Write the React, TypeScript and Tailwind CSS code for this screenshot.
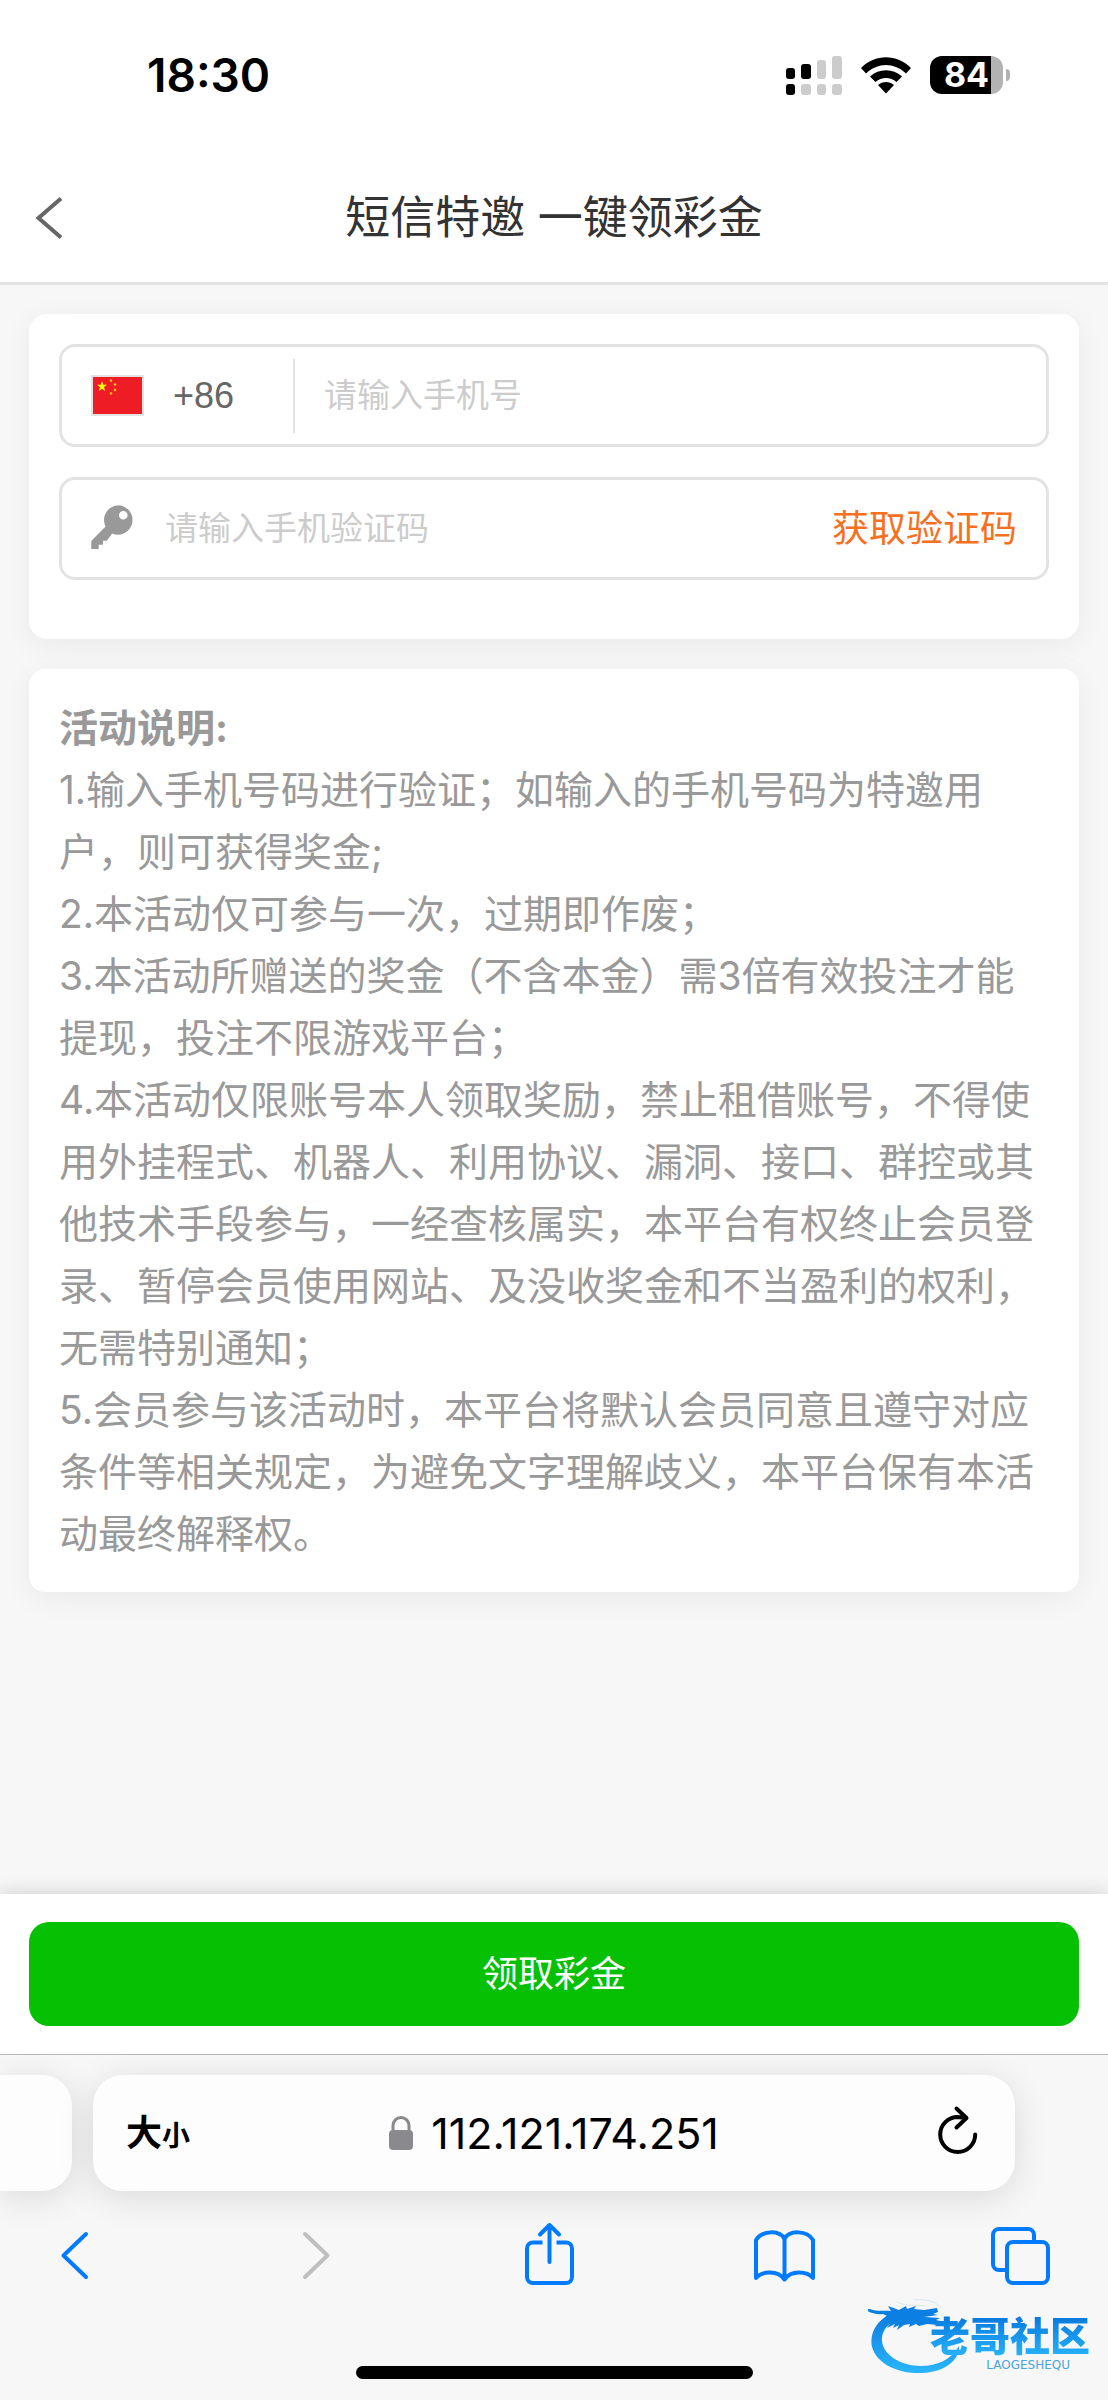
import React from 'react';

const rules = [
  '1.输入手机号码进行验证；如输入的手机号码为特邀用户，则可获得奖金;',
  '2.本活动仅可参与一次，过期即作废；',
  '3.本活动所赠送的奖金（不含本金）需3倍有效投注才能提现，投注不限游戏平台；',
  '4.本活动仅限账号本人领取奖励，禁止租借账号，不得使用外挂程式、机器人、利用协议、漏洞、接口、群控或其他技术手段参与，一经查核属实，本平台有权终止会员登录、暂停会员使用网站、及没收奖金和不当盈利的权利，无需特别通知；',
  '5.会员参与该活动时，本平台将默认会员同意且遵守对应条件等相关规定，为避免文字理解歧义，本平台保有本活动最终解释权。',
];

const toolbar = [
  { label: '后退', color: 'text-[#007aff]', icon: <path d="M42 12 19.5 33.5 42 55" /> },
  { label: '前进', color: 'text-[#bfbfbf]', icon: <path d="M25 12 47.5 33.5 25 55" /> },
  {
    label: '分享',
    color: 'text-[#007aff]',
    icon: (
      <>
        <path d="M25.5 20.5H16a6 6 0 0 0-6 6V55a6 6 0 0 0 6 6h33a6 6 0 0 0 6-6V26.500a6 6 0 0 0-6-6h-9.500" strokeLinecap="butt" />
        <path d="M32.500 40V3.500M23 12.500l9.500-9.500 9.500 9.500" />
      </>
    ),
  },
  {
    label: '书签',
    color: 'text-[#007aff]',
    icon: (
      <path d="M31.500 17C27 8 9 8 3 18v38c6-7 22-8 28.500 1.500C38 48 54 49 60 56V18C54 8 36 8 31.500 17v40" />
    ),
  },
  {
    label: '标签页',
    color: 'text-[#007aff]',
    icon: (
      <>
        <path d="M45 20v-7a6 6 0 0 0-6-6H10a6 6 0 0 0-6 6v29a6 6 0 0 0 6 6h8" strokeLinecap="butt" />
        <rect x="18" y="20" width="41" height="41" rx="6" />
      </>
    ),
  },
];

function StatusBar() {
  return (
    <div className="flex h-[149px] items-center justify-between pr-[98px] pl-[147px] text-black">
      <time className="font-[Inter,sans-serif] text-[46px] leading-none font-semibold">18:30</time>
      <div className="flex items-center gap-[19px]">
        <svg width="56" height="40" viewBox="0 0 56 40">
          <g fill="#000">
            <rect x="0" y="13" width="9" height="11" rx="3" />
            <rect x="15" y="9" width="10" height="15" rx="3" />
            <rect x="0" y="29" width="9" height="11" rx="3" />
          </g>
          <g fill="#ccc">
            <rect x="31" y="5" width="9" height="19" rx="3" />
            <rect x="46" y="1" width="10" height="23" rx="3" />
            <rect x="15" y="29" width="10" height="11" rx="3" />
            <rect x="31" y="29" width="9" height="11" rx="3" />
            <rect x="46" y="29" width="10" height="11" rx="3" />
          </g>
        </svg>
        <svg width="50" height="38" viewBox="0 0 50 38">
          <path d="M0 12C14-2.500 36-2.500 50 12l-5 5.500C33 6 17 6 5 17.500z" />
          <path d="M9 20.500c9-8.500 23-8.500 32 0L35.500 26c-6-5.500-15-5.500-21 0z" />
          <path d="M17 29c4.500-4 11.500-4 16 0l-8 8.500z" />
        </svg>
        <div className="flex items-center gap-[3px]">
          <div className="flex h-[38px] w-[73px] items-center justify-center rounded-[12px] bg-[linear-gradient(90deg,#000_61px,#b3b3b3_61px)] font-[Inter,sans-serif] text-[34px] leading-none font-bold text-white">
            84
          </div>
          <div className="h-3 w-1 rounded-r-full bg-[#b3b3b3]" />
        </div>
      </div>
    </div>
  );
}

function Flag() {
  return (
    <svg width="53" height="41" viewBox="0 0 53 41" className="shrink-0">
      <rect width="53" height="41" fill="#e3e3e3" />
      <rect x="2" y="2" width="49" height="37" fill="#ee1c25" />
      <path fill="#ff0" d="m11 6 1.300 3.700H16l-3 2.400 1.100 3.900-3.100-2.300L7.900 16 9 12.100 6 9.700h3.700z" />
      <g fill="#f9c613">
        <circle cx="20" cy="5.500" r="1.300" />
        <circle cx="24" cy="9.500" r="1.300" />
        <circle cx="24" cy="15" r="1.300" />
        <circle cx="20" cy="18.500" r="1.300" />
      </g>
    </svg>
  );
}

function KeyIcon() {
  return (
    <svg width="42" height="48" viewBox="0 0 42 48" fill="#999" className="shrink-0">
      <path
        fillRule="evenodd"
        d="M27.500 0.300a14.500 14.700 0 1 1-6.200 28.200l-5.600 7.200H12v4H7.700V44H.3v-8L14.500 21.500A14.500 14.700 0 0 1 27.500.3zm4.800 5.700a4.300 4.300 0 1 0 0 8.600 4.300 4.300 0 0 0 0-8.600z"
      />
    </svg>
  );
}

function Logo() {
  return (
    <div className="absolute right-[18px] bottom-[24px] h-[80px] w-[222px]">
      <svg width="94" height="80" viewBox="0 0 94 80" className="absolute top-0 left-0">
        <defs>
          <linearGradient id="wave" x1="0" y1="0" x2="0" y2="1">
            <stop offset="0" stopColor="#0877dd" />
            <stop offset="1" stopColor="#2ab6fb" />
          </linearGradient>
        </defs>
        <path
          fill="url(#wave)"
          d="M34 13C10 20 1 36 4 51c5 18 28 27 50 26 24-1 38-14 37-27-8 14-22 20-38 20-20 0-38-11-39-25-1-11 8-21 24-25z"
        />
        <path
          fill="#0b80e2"
          d="M2 13c8 3 14 1 21 2l-3-5 11 4 7-4 1 3 9-3-2 3 10 1 13-2 1 4-5 2 5 1-14 2 16 1-4 2 4 1-2 4-11-1-8 2-3-2-7 3 1-3-6 1-7 5 2-5-6 3 2-4-8 4 6-9-10-5c-8 1-15-2-18-5z"
        />
        <path fill="none" stroke="#d5e8f2" d="M29 6c10 5 18 2 27 4M46 4c12-1 22 1 27 8" />
      </svg>
      <div className="absolute right-0 bottom-[5px] flex flex-col items-end">
        <span className="bg-linear-to-b from-[#0877dd] to-[#2ab6fb] bg-clip-text text-[40px] leading-[44px] font-black text-transparent">
          老哥社区
        </span>
        <span className="pr-5 font-['DejaVu_Sans',sans-serif] text-[12px] leading-[12px] text-[#4aa3e0]">LAOGESHEQU</span>
      </div>
    </div>
  );
}

export default function App() {
  return (
    <div
      lang="zh-CN"
      className="flex min-h-screen flex-col bg-[#f7f7f7] font-[Inter,'Noto_Sans_CJK_SC',sans-serif]"
    >
      <header className="border-b-[3px] border-[#e2e2e2] bg-white">
        <StatusBar />
        <div className="grid h-[133px] grid-cols-[1fr_auto_1fr] items-center px-[35px] pt-1">
          <button aria-label="返回" className="w-7">
            <svg width="28" height="42" viewBox="0 0 28 42" fill="none" stroke="#666" strokeWidth="4">
              <path d="M26 1.500 3.500 21 26 40.500" />
            </svg>
          </button>
          <h1 className="text-[45px] leading-[60px] text-[#333]">短信特邀 一键领彩金</h1>
        </div>
      </header>

      <main className="flex flex-1 flex-col gap-[30px] px-[29px] pt-[29px] pb-[30px]">
        <form className="flex flex-col gap-[30px] rounded-[18px] bg-white px-[30px] pt-[30px] pb-[59px] shadow-[0_6px_30px_rgba(0,0,0,0.06)]">
          <div className="flex h-[103px] items-center rounded-[16px] border-[3px] border-[#e3e3e3] px-[29px]">
            <Flag />
            <label
              htmlFor="phone"
              className="ml-[29px] w-[120px] font-['Liberation_Sans',sans-serif] text-[36px] text-[#666]"
            >
              +86
            </label>
            <span className="h-[74px] w-[2px] bg-[#e3e3e3]" />
            <input
              id="phone"
              type="tel"
              placeholder="请输入手机号"
              className="ml-[29px] min-w-0 flex-1 text-[33px] text-[#333] outline-none placeholder:text-[#ccc]"
            />
          </div>
          <div className="flex h-[103px] items-center rounded-[16px] border-[3px] border-[#e3e3e3] px-[29px]">
            <label htmlFor="code" aria-label="验证码">
              <KeyIcon />
            </label>
            <input
              id="code"
              placeholder="请输入手机验证码"
              className="ml-[32px] min-w-0 flex-1 text-[33px] text-[#333] outline-none placeholder:text-[#ccc]"
            />
            <button type="button" className="text-[37px] text-[#f5701f]">
              获取验证码
            </button>
          </div>
        </form>

        <section className="rounded-[16px] bg-white px-[30px] pt-[28px] pb-[27px] text-[39px] leading-[62px] text-[#999] shadow-[0_6px_30px_rgba(0,0,0,0.06)]">
          <h2 className="font-bold">活动说明:</h2>
          {rules.map((rule) => (
            <p key={rule}>{rule}</p>
          ))}
        </section>
      </main>

      <div className="bg-white px-[29px] py-[28px] shadow-[0_-2px_18px_rgba(0,0,0,0.15)]">
        <button className="h-[104px] w-full rounded-[20px] bg-[#06c103] text-[36px] text-white">领取彩金</button>
      </div>

      <footer className="relative border-t border-[#b9b9b9] bg-[#f7f7f7] pt-[20px] pb-[21px]">
        <div className="flex h-[116px] gap-[21px] pr-[93px]">
          <div className="w-[72px] rounded-r-[30px] bg-[#fdfdfd] shadow-[0_6px_36px_rgba(0,0,0,0.12)]" />
          <div className="grid flex-1 grid-cols-[1fr_auto_1fr] items-center rounded-[30px] bg-[#fdfdfd] px-[33px] text-black shadow-[0_6px_36px_rgba(0,0,0,0.12)]">
            <button className="justify-self-start font-bold">
              <span className="text-[36px]">大</span>
              <span className="text-[28px]">小</span>
            </button>
            <button className="flex items-center gap-[18px] text-[43px]">
              <svg width="24" height="34" viewBox="0 0 24 34">
                <path d="M4 15V9.500a8 8 0 0 1 16 0V15" fill="none" stroke="#8a8a8e" strokeWidth="3" />
                <rect y="14" width="24" height="20" rx="4" fill="#8a8a8e" />
              </svg>
              112.121.174.251
            </button>
            <button aria-label="重新载入" className="justify-self-end">
              <svg
                width="46"
                height="56"
                viewBox="0 0 46 56"
                fill="none"
                stroke="currentColor"
                strokeWidth="4"
                strokeLinecap="round"
                strokeLinejoin="round"
              >
                <path d="M39.200 29.500A17.500 17.500 0 1 1 21.700 12l8 1M20.500 3.500l10 9.500-10 9.500" />
              </svg>
            </button>
          </div>
        </div>

        <nav className="mt-[31px] flex justify-between pr-[57px] pl-[44px]">
          {toolbar.map((item) => (
            <button key={item.label} aria-label={item.label} className={item.color}>
              <svg
                width="62"
                height="64"
                viewBox="0 0 62 64"
                fill="none"
                stroke="currentColor"
                strokeWidth="4"
                strokeLinecap="round"
                strokeLinejoin="round"
              >
                {item.icon}
              </svg>
            </button>
          ))}
        </nav>

        <div className="mx-auto mt-[80px] h-[13px] w-[397px] rounded-full bg-black" />
        <Logo />
      </footer>
    </div>
  );
}
